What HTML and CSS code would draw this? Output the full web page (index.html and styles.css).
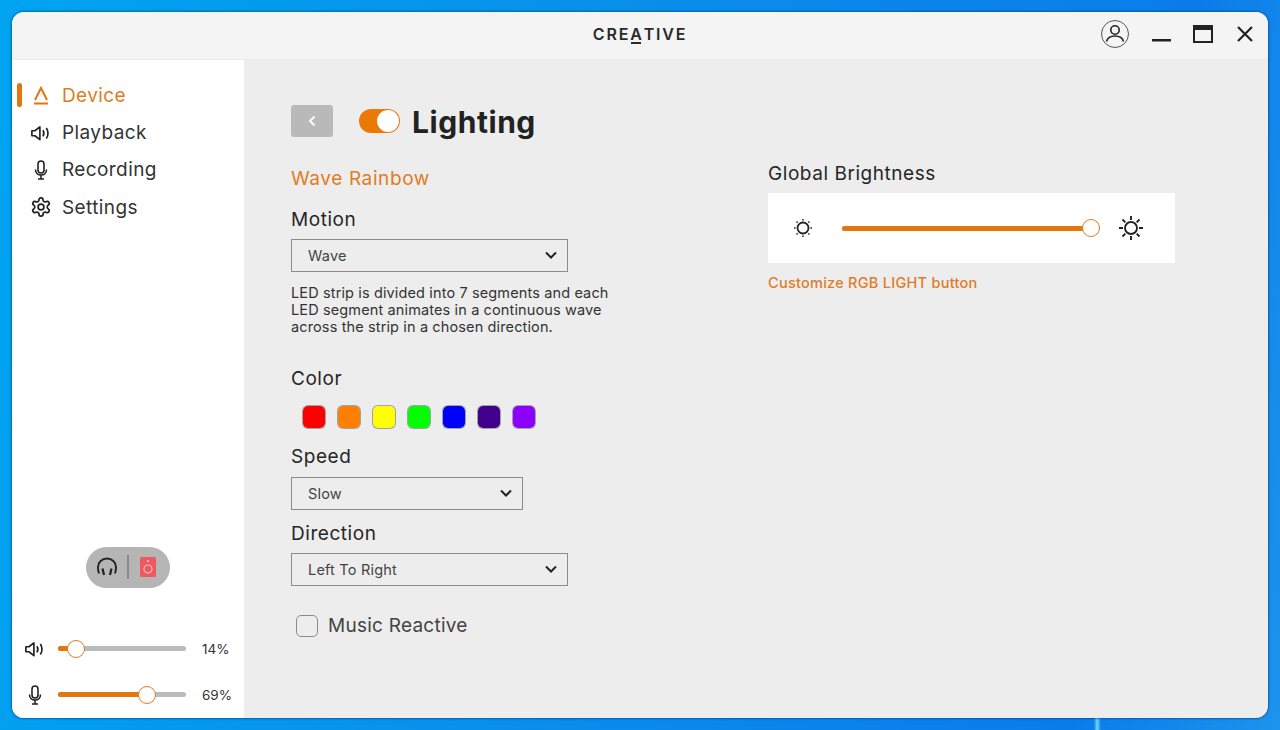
FILE: index.html
```html
<!DOCTYPE html>
<html lang="en">
<head>
<meta charset="utf-8">
<title>Creative</title>
<link rel="stylesheet" href="styles.css">
</head>
<body>
<div class="window">
  <header class="titlebar">
    <div></div>
    <div class="logo">CRE<span class="logo-a">A</span>TIVE</div>
    <div class="controls">
      <svg class="ctl-user" width="30" height="30" viewBox="0 0 30 30" fill="none" stroke="#222"><circle cx="15" cy="15" r="13.5" stroke="#555"/><circle cx="15" cy="11" r="4.2" stroke-width="1.6"/><path d="M6.5 22.5c1-4 4.500-5.500 8.500-5.500s7.500 1.500 8.500 5.500" stroke-width="1.6"/></svg>
      <svg class="ctl-min" width="19" height="4" viewBox="0 0 19 4"><rect y="1" width="19" height="2.500" fill="#222"/></svg>
      <svg class="ctl-max" width="20" height="18" viewBox="0 0 20 18" fill="none"><rect x="1" y="1" width="18" height="16" stroke="#222" stroke-width="2"/><rect x="1" y="1" width="18" height="4" fill="#222"/></svg>
      <svg class="ctl-close" width="16" height="16" viewBox="0 0 16 16" stroke="#222" stroke-width="2.200"><path d="M1 1l14 14M15 1L1 15"/></svg>
    </div>
  </header>
  <div class="content">
    <aside class="sidebar">
      <nav class="nav">
        <div class="nav-item active">
          <span class="marker"></span>
          <svg class="nav-icon" width="20" height="20" viewBox="0 0 20 20" fill="none" stroke="#e2760f" stroke-width="2"><path d="M4 15L10 3l6 12"/><path d="M3 18.500h14"/></svg>
          <span>Device</span>
        </div>
        <div class="nav-item">
          <svg class="nav-icon" width="20" height="20" viewBox="0 0 18 18" fill="none" stroke="#222" stroke-width="1.500"><path d="M.8 7v4.500h2.700l4.500 3.500V3.500L3.500 7z" stroke-linejoin="round"/><path d="M10.800 6.500c1 1.700 1 3.800 0 5.500M13.800 4.500c1.800 2.800 1.800 6.700 0 9.500"/></svg>
          <span>Playback</span>
        </div>
        <div class="nav-item">
          <svg class="nav-icon" width="20" height="20" viewBox="0 0 20 20" fill="none" stroke="#222" stroke-width="1.600"><rect x="7" y="1" width="6" height="12" rx="3"/><path d="M4.500 9.500c0 3.500 2.500 5.500 5.500 5.500s5.500-2 5.500-5.500M10 15v4M7 19h6"/></svg>
          <span>Recording</span>
        </div>
        <div class="nav-item">
          <svg class="nav-icon" width="20" height="20" viewBox="1 1 22 22" fill="none" stroke="#222" stroke-width="1.900"><path d="M12.220 2h-.44a2 2 0 0 0-2 2v.18a2 2 0 0 1-1 1.730l-.43.25a2 2 0 0 1-2 0l-.15-.08a2 2 0 0 0-2.730.730l-.22.38a2 2 0 0 0 .73 2.730l.15.1a2 2 0 0 1 1 1.720v.51a2 2 0 0 1-1 1.740l-.15.09a2 2 0 0 0-.73 2.730l.22.38a2 2 0 0 0 2.730.73l.15-.08a2 2 0 0 1 2 0l.43.25a2 2 0 0 1 1 1.730V20a2 2 0 0 0 2 2h.44a2 2 0 0 0 2-2v-.18a2 2 0 0 1 1-1.730l.43-.25a2 2 0 0 1 2 0l.15.08a2 2 0 0 0 2.730-.73l.22-.39a2 2 0 0 0-.73-2.730l-.15-.08a2 2 0 0 1-1-1.740v-.5a2 2 0 0 1 1-1.740l.15-.09a2 2 0 0 0 .73-2.730l-.22-.38a2 2 0 0 0-2.730-.73l-.15.08a2 2 0 0 1-2 0l-.43-.25a2 2 0 0 1-1-1.730V4a2 2 0 0 0-2-2z"/><circle cx="12" cy="12" r="3.200"/></svg>
          <span>Settings</span>
        </div>
      </nav>
      <div class="output-pill">
        <svg width="20" height="20" viewBox="0 0 20 20" fill="none" stroke="#222" stroke-width="1.900"><path d="M2 16.500C1 14 1 12 1 10a9 8.500 0 0 1 18 0c0 2 0 4-1 6.500"/><path d="M5.500 11.500l1.500 6.500M14.500 11.500l-1.500 6.500" stroke-width="2.200"/></svg>
        <span class="pill-divider"></span>
        <svg width="16" height="20" viewBox="0 0 16 20"><rect width="16" height="20" rx="1.500" fill="#ec5a5f"/><circle cx="8" cy="4" r="1.200" fill="#f7b5b5"/><circle cx="8" cy="12" r="4" fill="none" stroke="#f7c0c0" stroke-width="1.200"/></svg>
      </div>
      <div class="volume-row row-speaker">
        <svg class="vol-icon" width="20" height="20" viewBox="0 0 18 18" fill="none" stroke="#222" stroke-width="1.500"><path d="M.8 7v4.500h2.700l4.500 3.500V3.500L3.500 7z" stroke-linejoin="round"/><path d="M10.800 6.500c1 1.700 1 3.800 0 5.500M13.800 4.500c1.800 2.800 1.800 6.700 0 9.500"/></svg>
        <div class="track side-track"><div class="fill" style="width:14%"></div><span class="thumb" style="left:14%"></span></div>
        <span class="pct">14%</span>
      </div>
      <div class="volume-row row-mic">
        <svg class="vol-icon" width="20" height="20" viewBox="0 0 20 20" fill="none" stroke="#222" stroke-width="1.600"><rect x="7" y="1" width="6" height="12" rx="3"/><path d="M4.500 9.500c0 3.500 2.500 5.500 5.500 5.500s5.500-2 5.500-5.500M10 15v4M7 19h6"/></svg>
        <div class="track side-track"><div class="fill" style="width:69.500%"></div><span class="thumb" style="left:69.500%"></span></div>
        <span class="pct">69%</span>
      </div>
    </aside>
    <main class="main">
      <section class="col-left">
        <div class="page-head">
          <button class="back" type="button"><svg width="8" height="12" viewBox="0 0 8 12" fill="none" stroke="#fff" stroke-width="1.800"><path d="M6.500 1.500L2 6l4.500 4.500"/></svg></button>
          <span class="switch"><span class="switch-knob"></span></span>
          <h1 class="page-title">Lighting</h1>
        </div>
        <div class="effect-name">Wave Rainbow</div>
        <div class="label label-motion">Motion</div>
        <div class="select sel-motion"><span>Wave</span><svg class="chev" width="12" height="8" viewBox="0 0 12 8" fill="none" stroke="#222" stroke-width="2"><path d="M1 1.500l5 5 5-5"/></svg></div>
        <p class="desc">LED strip is divided into 7 segments and each LED segment animates in a continuous wave across the strip in a chosen direction.</p>
        <div class="label label-color">Color</div>
        <div class="swatches">
          <span class="swatch c-red"></span>
          <span class="swatch c-orange"></span>
          <span class="swatch c-yellow"></span>
          <span class="swatch c-green"></span>
          <span class="swatch c-blue"></span>
          <span class="swatch c-indigo"></span>
          <span class="swatch c-violet"></span>
        </div>
        <div class="label label-speed">Speed</div>
        <div class="select sel-speed"><span>Slow</span><svg class="chev" width="12" height="8" viewBox="0 0 12 8" fill="none" stroke="#222" stroke-width="2"><path d="M1 1.500l5 5 5-5"/></svg></div>
        <div class="label label-direction">Direction</div>
        <div class="select sel-direction"><span>Left To Right</span><svg class="chev" width="12" height="8" viewBox="0 0 12 8" fill="none" stroke="#222" stroke-width="2"><path d="M1 1.500l5 5 5-5"/></svg></div>
        <div class="check-row"><span class="checkbox"></span><span>Music Reactive</span></div>
      </section>
      <section class="col-right">
        <div class="label label-global">Global Brightness</div>
        <div class="bright-panel">
          <svg class="sun-small" width="20" height="20" viewBox="0 0 20 20" fill="none" stroke="#222"><circle cx="10" cy="10" r="5.500" stroke-width="1.800"/><path d="M10 1v1.500M10 17.500V19M1 10h1.500M17.500 10H19M3.600 3.600l1 1M15.400 15.400l1 1M3.600 16.400l1-1M15.400 4.600l1-1" stroke-width="1.500"/></svg>
          <div class="track bright-track"><div class="fill" style="width:96.500%"></div><span class="thumb" style="left:96.500%"></span></div>
          <svg class="sun-big" width="26" height="26" viewBox="0 0 26 26" fill="none" stroke="#222" stroke-width="1.900"><circle cx="13" cy="13" r="6"/><path d="M13 1v4M13 21v4M1 13h4M21 13h4M4.500 4.500l2.800 2.800M18.700 18.700l2.800 2.800M4.500 21.500l2.800-2.800M18.700 7.300l2.800-2.800"/></svg>
        </div>
        <div class="customize">Customize RGB LIGHT button</div>
      </section>
    </main>
  </div>
</div>
</body>
</html>
```
FILE: styles.css
```css
* { box-sizing: border-box; }
html, body { height: 100%; }
body {
  margin: 0;
  padding: 12px;
  height: 730px;
  overflow: hidden;
  font-family: Inter, "Open Sans", sans-serif;
  color: #262626;
  background:
    linear-gradient(90deg, transparent 1094px, #6fdcf4 1097px, transparent 1101px) no-repeat 0 718px / 100% 12px,
    linear-gradient(100deg, #00a4f0 0%, #0a8ceb 50%, #0a7cea 85%, #1c94ec 100%);
}
.window {
  height: 706px;
  display: flex;
  flex-direction: column;
  border-radius: 12px;
  overflow: hidden;
  background: #ededed;
  box-shadow: 0 0 2px 1px rgba(0, 60, 130, .55);
}
.titlebar {
  height: 48px;
  flex: none;
  display: grid;
  grid-template-columns: 1fr auto 1fr;
  align-items: center;
  background: #f4f4f4;
  border-bottom: 1px solid #ebebeb;
}
.logo {
  font-size: 16px;
  font-weight: 600;
  letter-spacing: 1.8px;
  color: #2a2a2a;
  transform: translateY(-2px);
}
.logo-a { position: relative; }
.logo-a::after {
  content: "";
  position: absolute;
  left: 1px;
  right: 3px;
  bottom: 0;
  height: 2px;
  background: #2a2a2a;
}
.controls {
  display: flex;
  align-items: center;
  justify-content: flex-end;
  padding-right: 15px;
  transform: translateY(-2px);
}
.ctl-user { margin-right: 22px; }
.ctl-min { margin-right: 22px; margin-top: 12px; }
.ctl-max { margin-right: 24px; margin-top: 1px; }
.ctl-close { margin-top: 1px; }
.content { flex: 1; display: flex; min-height: 0; }
.sidebar {
  width: 232px;
  flex: none;
  background: #fff;
  display: flex;
  flex-direction: column;
  padding-top: 16.700px;
}
.nav { display: flex; flex-direction: column; }
.nav-item {
  position: relative;
  height: 37.300px;
  display: flex;
  align-items: center;
  padding-left: 19px;
  font-size: 19px;
  letter-spacing: .4px;
  color: #333;
}
.nav-icon { margin-right: 11px; flex: none; }
.nav-item.active { color: #df7c26; }
.marker {
  position: absolute;
  left: 5px;
  top: 6px;
  width: 5px;
  height: 24px;
  border-radius: 3px;
  background: #e2760f;
}
.output-pill {
  margin: 321.100px 0 0 74px;
  width: 84px;
  height: 41px;
  border-radius: 21px;
  background: #b5b5b5;
  display: flex;
  align-items: center;
  justify-content: space-between;
  padding: 0 14px 0 11px;
}
.pill-divider { width: 2px; height: 24px; background: #8a8a8a; margin-left: -2px; }
.volume-row { display: flex; align-items: center; height: 20px; padding-left: 13px; }
.row-speaker { margin-top: 51px; }
.row-mic { margin-top: 26px; }
.vol-icon { flex: none; margin-right: 13px; }
.track {
  position: relative;
  height: 5px;
  border-radius: 3px;
  background: #bbb;
}
.side-track { width: 128px; }
.fill { height: 100%; border-radius: 3px; background: #e2760f; }
.thumb {
  position: absolute;
  top: 50%;
  width: 18px;
  height: 18px;
  margin: -9px 0 0 -9px;
  border-radius: 50%;
  background: #fff;
  border: 1px solid #df7c26;
}
.pct { margin-left: 16px; font-size: 13.5px; color: #333; }
.main { flex: 1; display: flex; padding: 45px 0 0 47px; }
.col-left { width: 477px; flex: none; }
.col-right { width: 407px; flex: none; padding-top: 57px; }
.page-head { display: flex; align-items: center; height: 32px; }
.back {
  width: 42px;
  height: 32px;
  padding: 0;
  border: 0;
  border-radius: 3px;
  background: #b9b9b9;
  display: flex;
  align-items: center;
  justify-content: center;
}
.switch {
  margin-left: 26px;
  width: 41px;
  height: 24px;
  border-radius: 12px;
  background: #ec7806;
  display: flex;
  align-items: center;
  justify-content: flex-end;
  padding-right: 1px;
}
.switch-knob { width: 22px; height: 22px; border-radius: 50%; background: #fff; }
.page-title {
  margin: 2px 0 0 12px;
  font-size: 30px;
  font-weight: 700;
  line-height: 32px;
  letter-spacing: .55px;
  color: #222;
}
.effect-name {
  margin-top: 30px;
  font-size: 19px;
  line-height: 24px;
  letter-spacing: .6px;
  color: #df7c26;
}
.label {
  font-size: 19px;
  line-height: 24px;
  letter-spacing: .55px;
  color: #262626;
}
.label-motion { margin-top: 17px; }
.label-color { margin-top: 32px; }
.label-speed { margin-top: 16px; }
.label-direction { margin-top: 12px; }
.select {
  height: 33px;
  display: flex;
  align-items: center;
  justify-content: space-between;
  padding: 0 10px 1px 16px;
  border: 1px solid #8c8c8c;
  font-size: 14.5px;
  letter-spacing: .2px;
  color: #444;
}
.sel-motion { width: 277px; margin-top: 7px; }
.sel-speed { width: 232px; margin-top: 8px; }
.sel-direction { width: 277px; margin-top: 7px; }
.desc {
  width: 330px;
  margin: 12px 0 0;
  font-size: 14.5px;
  line-height: 17px;
  letter-spacing: .13px;
  color: #333;
}
.swatches { display: flex; gap: 11px; margin: 14px 0 0 11px; }
.swatch {
  width: 24px;
  height: 24px;
  border-radius: 6px;
  border: 1.5px solid rgba(90, 90, 90, .5);
  background-clip: padding-box;
}
.c-red { background-color: #ff0000; }
.c-orange { background-color: #ff8000; }
.c-yellow { background-color: #ffff00; }
.c-green { background-color: #00ff00; }
.c-blue { background-color: #0000ff; }
.c-indigo { background-color: #40008c; }
.c-violet { background-color: #8c00ff; }
.check-row {
  display: flex;
  align-items: center;
  gap: 10px;
  margin: 28px 0 0 5px;
  font-size: 19px;
  letter-spacing: .25px;
  color: #444;
}
.checkbox {
  width: 22px;
  height: 22px;
  border: 1.5px solid #8c8c8c;
  border-radius: 5px;
}
.bright-panel {
  height: 70px;
  margin-top: 7px;
  background: #fff;
  display: flex;
  align-items: center;
  padding-left: 25px;
}
.sun-small { flex: none; margin-right: 29px; }
.bright-track { width: 258px; background: #bbb; }
.sun-big { flex: none; margin-left: 18px; }
.customize {
  margin-top: 11px;
  font-size: 14.5px;
  line-height: 18px;
  font-weight: 500;
  letter-spacing: .26px;
  color: #df7c26;
}
```
